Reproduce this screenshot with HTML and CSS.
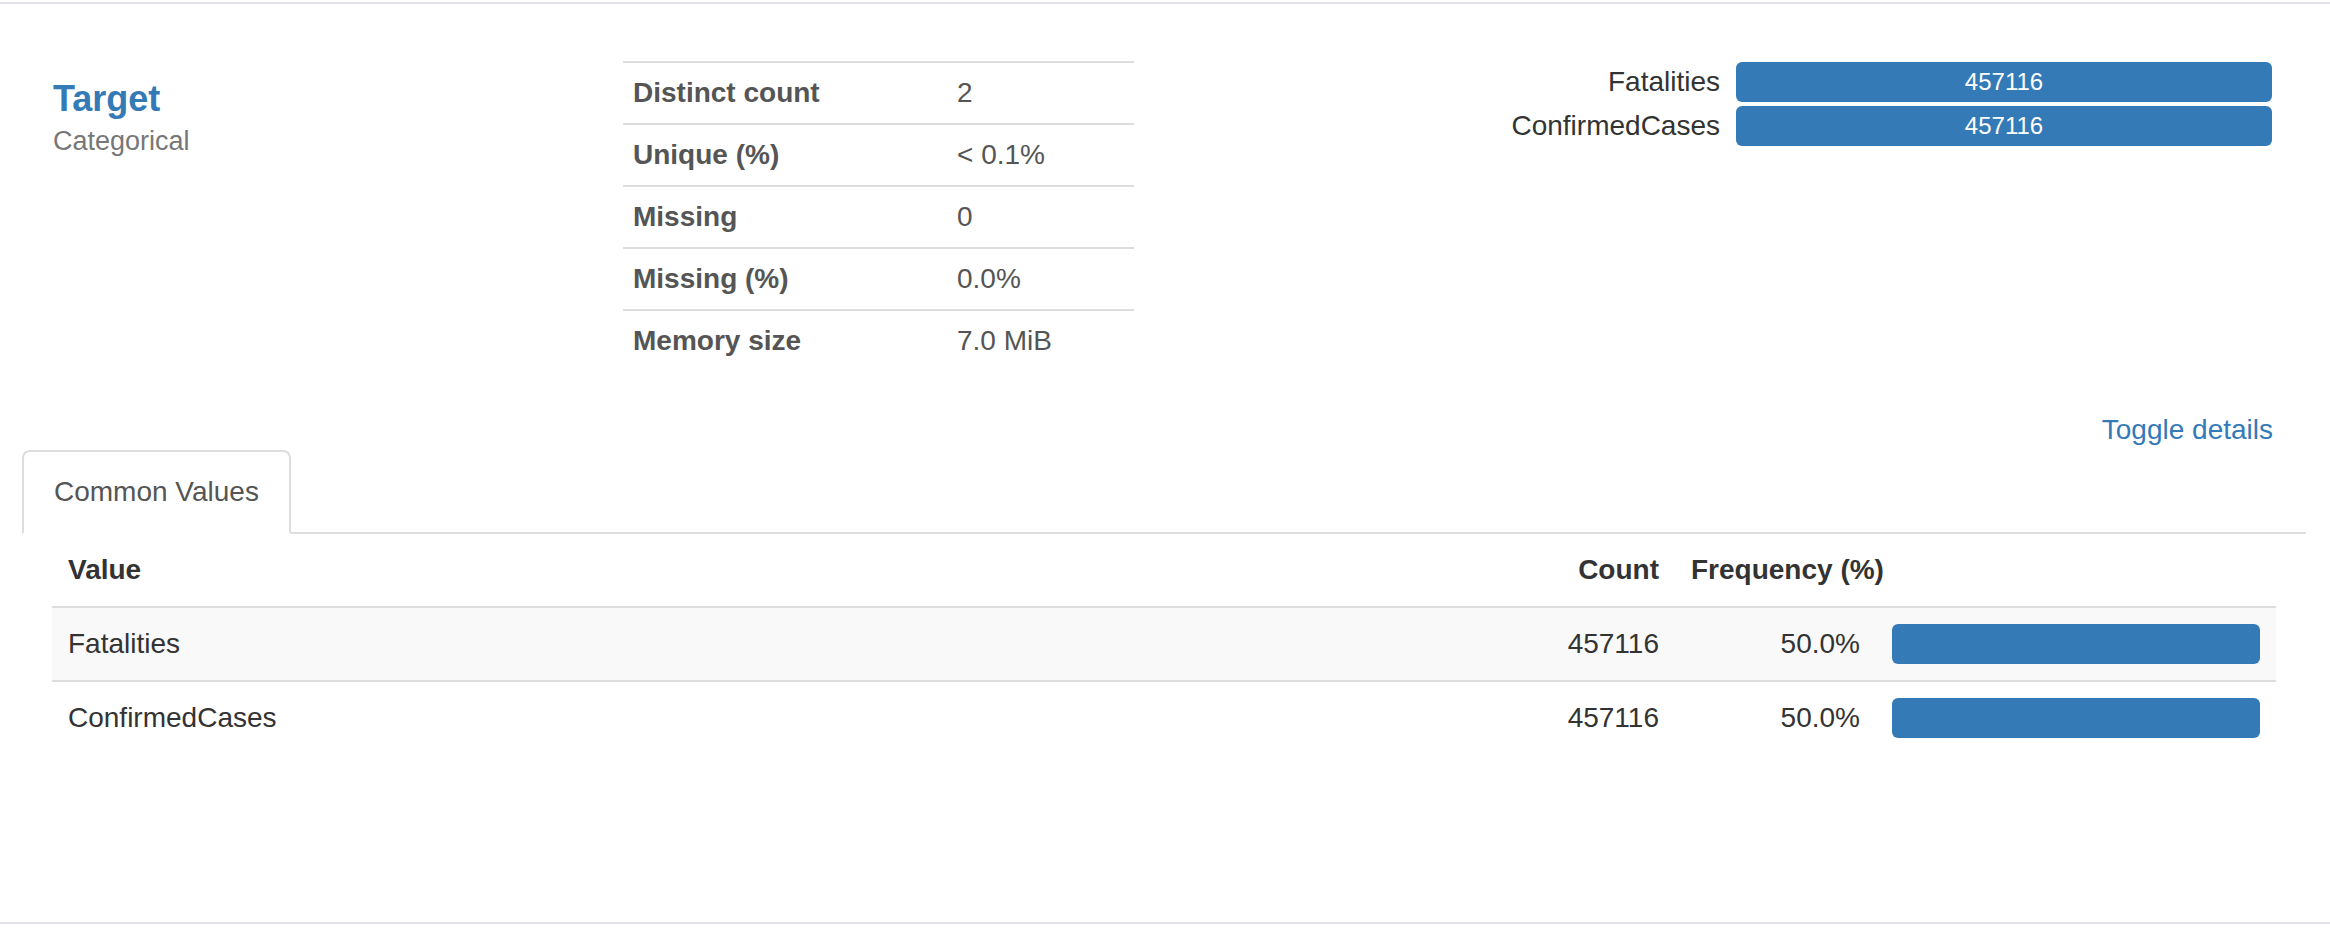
FILE: index.html
```html
<!DOCTYPE html>
<html lang="en">
<head>
<meta charset="utf-8">
<title>Target</title>
<link rel="stylesheet" href="styles.css">
</head>
<body>
<section class="variable">
  <div class="row">
    <div class="col col-name">
      <p class="var-title"><a href="#">Target</a></p>
      <small class="var-type">Categorical</small>
    </div>
    <div class="col col-stats">
      <table class="stats">
        <tr><th>Distinct count</th><td>2</td></tr>
        <tr><th>Unique (%)</th><td>&lt; 0.1%</td></tr>
        <tr><th>Missing</th><td>0</td></tr>
        <tr><th>Missing (%)</th><td>0.0%</td></tr>
        <tr><th>Memory size</th><td>7.0 MiB</td></tr>
      </table>
    </div>
    <div class="col col-chart">
      <div class="mini">
        <div class="mini-label">Fatalities</div>
        <div class="mini-bar">457116</div>
        <div class="mini-label">ConfirmedCases</div>
        <div class="mini-bar">457116</div>
      </div>
    </div>
  </div>
  <div class="toggle-row"><a href="#" class="toggle">Toggle details</a></div>
  <div class="tabs">
    <ul class="nav">
      <li class="tab active">Common Values</li>
    </ul>
    <div class="tab-content">
      <table class="freq">
        <colgroup>
          <col>
          <col class="c-count">
          <col class="c-freq">
          <col class="c-bar">
        </colgroup>
        <thead>
          <tr><th>Value</th><th class="num">Count</th><th colspan="2">Frequency (%)</th></tr>
        </thead>
        <tbody>
          <tr><td>Fatalities</td><td class="num">457116</td><td class="num">50.0%</td><td><div class="bar" style="width:100%"></div></td></tr>
          <tr><td>ConfirmedCases</td><td class="num">457116</td><td class="num">50.0%</td><td><div class="bar" style="width:100%"></div></td></tr>
        </tbody>
      </table>
    </div>
  </div>
</section>
</body>
</html>
```

FILE: styles.css
```css
html, body {
  margin: 0;
  padding: 0;
  background: #fff;
}

body {
  font-family: "Liberation Sans", Arial, Helvetica, sans-serif;
  color: #333;
}

a {
  color: #337ab7;
  text-decoration: none;
}

.variable {
  margin-top: 2px;
  border-top: 2px solid #e1e1e8;
  border-bottom: 2px solid #e1e1e8;
  padding: 0 24px 168px 22px;
}

.row {
  display: flex;
  padding-top: 57px;
}

.col {
  box-sizing: border-box;
  padding: 0 30px;
}

.col-name,
.col-stats {
  width: 571px;
  flex: none;
}

.col-chart {
  flex: 1;
}

/* name column */
.var-title {
  margin: 18px 0 0 1px;
  font-size: 36px;
  line-height: 40px;
  font-weight: 700;
}

.var-type {
  display: block;
  margin: 2px 0 0 1px;
  font-size: 27px;
  line-height: 40px;
  color: #777;
}

/* stats table */
.stats {
  width: 100%;
  border-collapse: separate;
  border-spacing: 0;
  font-size: 28px;
  line-height: 40px;
  color: #555;
}

.stats th,
.stats td {
  padding: 10px;
  border-top: 2px solid #ddd;
  text-align: left;
  vertical-align: top;
}

.stats th {
  width: 304px;
  font-weight: 700;
}

.stats td {
  font-weight: 400;
}

/* mini chart */
.mini {
  margin-top: 1px;
  padding-right: 4px;
  display: grid;
  grid-template-columns: 1fr 536px;
  column-gap: 16px;
  row-gap: 4px;
}

.mini-label {
  font-size: 28px;
  line-height: 40px;
  text-align: right;
  color: #333;
  white-space: nowrap;
}

.mini-bar {
  height: 40px;
  background: #337ab7;
  border-radius: 6px;
  color: #fff;
  font-size: 24px;
  line-height: 40px;
  text-align: center;
}

/* toggle */
.toggle-row {
  margin-top: 39px;
  padding: 0 33px 0 30px;
  text-align: right;
  font-size: 28px;
  line-height: 40px;
}

/* tabs */
.nav {
  display: flex;
  list-style: none;
  margin: 0;
  padding: 0;
  border-bottom: 2px solid #ddd;
}

.tab {
  margin-bottom: -2px;
  padding: 20px 30px;
  border: 2px solid #ddd;
  border-bottom-color: transparent;
  border-radius: 8px 8px 0 0;
  background: #fff;
  font-size: 28px;
  line-height: 40px;
  color: #555;
}

.tab-content {
  padding: 0 30px;
}

/* frequency table */
.freq {
  width: 100%;
  table-layout: fixed;
  border-collapse: separate;
  border-spacing: 0;
  font-size: 28px;
  line-height: 40px;
  color: #333;
}

.freq .c-count {
  width: 125px;
}

.freq .c-freq {
  width: 201px;
}

.freq .c-bar {
  width: 400px;
}

.freq th,
.freq td {
  padding: 16px;
  text-align: left;
  vertical-align: middle;
  white-space: nowrap;
}

.freq th {
  font-weight: 700;
}

.freq td {
  border-top: 2px solid #ddd;
}

.freq .num {
  text-align: right;
}

.freq tbody tr:nth-child(odd) {
  background: #f9f9f9;
}

.bar {
  height: 40px;
  background: #337ab7;
  border-radius: 6px;
}
```
